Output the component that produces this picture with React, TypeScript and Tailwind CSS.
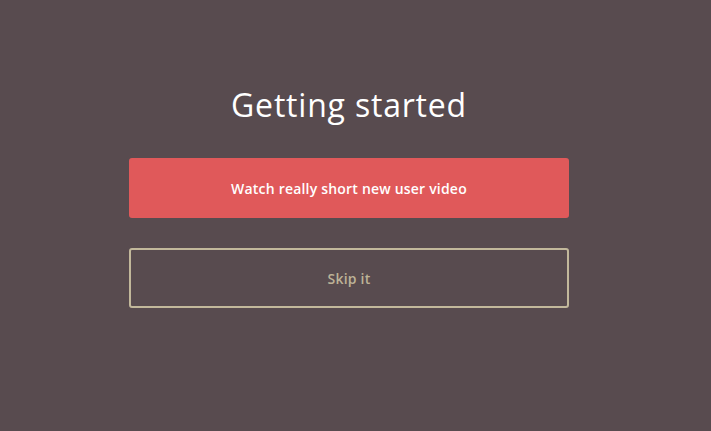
import React from "react";

export default function App() {
  return (
    <div className="w-[711px] h-[431px] bg-[#584b4f] overflow-hidden" style={{ fontFamily: "'Open Sans', Lato, sans-serif" }}>
      <div className="w-[440px] ml-[129px] pt-[83px] flex flex-col">
        <h1 className="text-center text-white text-[32px] leading-[44px] font-normal tracking-[0.8px]">Getting started</h1>
        <button className="mt-[31px] h-[60px] w-full rounded-[3px] bg-[#e0595a] text-white text-[14px] font-semibold tracking-[0.2px]">
          Watch really short new user video
        </button>
        <button className="mt-[30px] h-[60px] w-full rounded-[3px] border-2 border-[#c2b89b] text-[#bdb397] text-[14px] font-semibold tracking-[0.2px]">
          Skip it
        </button>
      </div>
    </div>
  );
}
